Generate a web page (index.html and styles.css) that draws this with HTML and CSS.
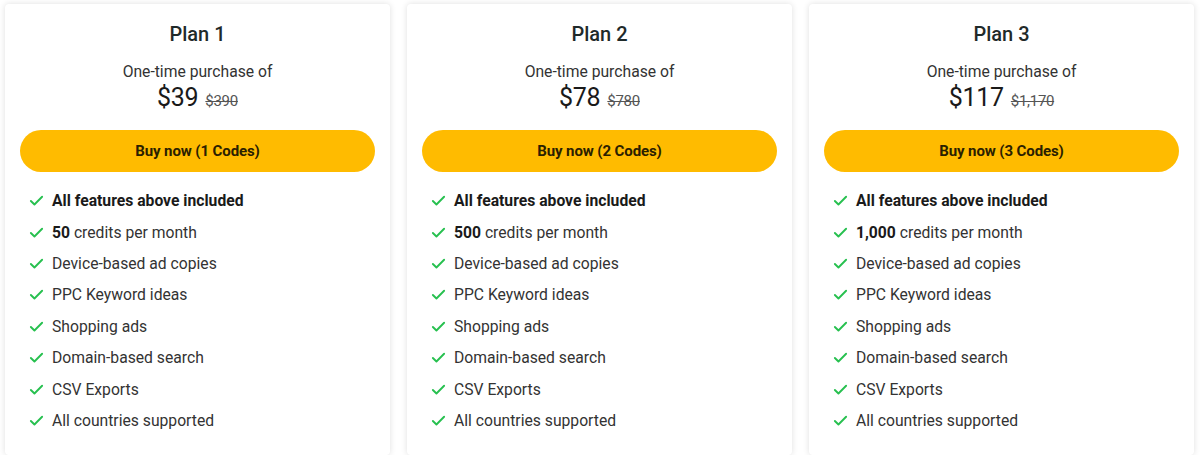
FILE: index.html
```html
<!DOCTYPE html>
<html>
<head>
<meta charset="utf-8">
<link rel="stylesheet" href="styles.css">
</head>
<body>
<div class="plans">
  <div class="card">
    <h2 class="title">Plan 1</h2>
    <p class="sub">One-time purchase of</p>
    <p class="price"><span class="now">$39</span><span class="was">$390</span></p>
    <button class="buy">Buy now (1 Codes)</button>
    <ul class="features">
      <li><svg class="chk" viewBox="0 0 16 16"><path d="M2 8.5l3.8 3.8L14 4"/></svg><b>All features above included</b></li>
      <li><svg class="chk" viewBox="0 0 16 16"><path d="M2 8.5l3.8 3.8L14 4"/></svg><span><b>50</b> credits per month</span></li>
      <li><svg class="chk" viewBox="0 0 16 16"><path d="M2 8.5l3.8 3.8L14 4"/></svg>Device-based ad copies</li>
      <li><svg class="chk" viewBox="0 0 16 16"><path d="M2 8.5l3.8 3.8L14 4"/></svg>PPC Keyword ideas</li>
      <li><svg class="chk" viewBox="0 0 16 16"><path d="M2 8.5l3.8 3.8L14 4"/></svg>Shopping ads</li>
      <li><svg class="chk" viewBox="0 0 16 16"><path d="M2 8.5l3.8 3.8L14 4"/></svg>Domain-based search</li>
      <li><svg class="chk" viewBox="0 0 16 16"><path d="M2 8.5l3.8 3.8L14 4"/></svg>CSV Exports</li>
      <li><svg class="chk" viewBox="0 0 16 16"><path d="M2 8.5l3.8 3.8L14 4"/></svg>All countries supported</li>
    </ul>
  </div>
  <div class="card">
    <h2 class="title">Plan 2</h2>
    <p class="sub">One-time purchase of</p>
    <p class="price"><span class="now">$78</span><span class="was">$780</span></p>
    <button class="buy">Buy now (2 Codes)</button>
    <ul class="features">
      <li><svg class="chk" viewBox="0 0 16 16"><path d="M2 8.5l3.8 3.8L14 4"/></svg><b>All features above included</b></li>
      <li><svg class="chk" viewBox="0 0 16 16"><path d="M2 8.5l3.8 3.8L14 4"/></svg><span><b>500</b> credits per month</span></li>
      <li><svg class="chk" viewBox="0 0 16 16"><path d="M2 8.5l3.8 3.8L14 4"/></svg>Device-based ad copies</li>
      <li><svg class="chk" viewBox="0 0 16 16"><path d="M2 8.5l3.8 3.8L14 4"/></svg>PPC Keyword ideas</li>
      <li><svg class="chk" viewBox="0 0 16 16"><path d="M2 8.5l3.8 3.8L14 4"/></svg>Shopping ads</li>
      <li><svg class="chk" viewBox="0 0 16 16"><path d="M2 8.5l3.8 3.8L14 4"/></svg>Domain-based search</li>
      <li><svg class="chk" viewBox="0 0 16 16"><path d="M2 8.5l3.8 3.8L14 4"/></svg>CSV Exports</li>
      <li><svg class="chk" viewBox="0 0 16 16"><path d="M2 8.5l3.8 3.8L14 4"/></svg>All countries supported</li>
    </ul>
  </div>
  <div class="card">
    <h2 class="title">Plan 3</h2>
    <p class="sub">One-time purchase of</p>
    <p class="price"><span class="now">$117</span><span class="was">$1,170</span></p>
    <button class="buy">Buy now (3 Codes)</button>
    <ul class="features">
      <li><svg class="chk" viewBox="0 0 16 16"><path d="M2 8.5l3.8 3.8L14 4"/></svg><b>All features above included</b></li>
      <li><svg class="chk" viewBox="0 0 16 16"><path d="M2 8.5l3.8 3.8L14 4"/></svg><span><b>1,000</b> credits per month</span></li>
      <li><svg class="chk" viewBox="0 0 16 16"><path d="M2 8.5l3.8 3.8L14 4"/></svg>Device-based ad copies</li>
      <li><svg class="chk" viewBox="0 0 16 16"><path d="M2 8.5l3.8 3.8L14 4"/></svg>PPC Keyword ideas</li>
      <li><svg class="chk" viewBox="0 0 16 16"><path d="M2 8.5l3.8 3.8L14 4"/></svg>Shopping ads</li>
      <li><svg class="chk" viewBox="0 0 16 16"><path d="M2 8.5l3.8 3.8L14 4"/></svg>Domain-based search</li>
      <li><svg class="chk" viewBox="0 0 16 16"><path d="M2 8.5l3.8 3.8L14 4"/></svg>CSV Exports</li>
      <li><svg class="chk" viewBox="0 0 16 16"><path d="M2 8.5l3.8 3.8L14 4"/></svg>All countries supported</li>
    </ul>
  </div>
</div>
</body>
</html>
```
FILE: styles.css
```css
html, body {
  margin: 0;
  padding: 0;
  background: #ffffff;
}
body {
  font-family: Roboto, "Liberation Sans", Arial, sans-serif;
  color: #222;
}
.plans {
  display: flex;
  gap: 17px;
  padding: 4px 5px 0 5px;
}
.card {
  width: 385px;
  height: 451px;
  box-sizing: border-box;
  background: #fff;
  border-radius: 4px;
  box-shadow: 0 0 6px rgba(0,0,0,0.13);
  padding: 18px 15px 0 15px;
  display: flex;
  flex-direction: column;
  align-items: stretch;
}
.title {
  margin: 0;
  text-align: center;
  font-size: 20px;
  font-weight: 500;
  line-height: 24px;
  color: #1f2a2a;
}
.sub {
  margin: 16px 0 0 0;
  text-align: center;
  font-size: 15.7px;
  line-height: 20px;
  color: #333;
}
.price {
  margin: 1px 0 0 0;
  text-align: center;
  line-height: 30px;
  color: #1a1a1a;
}
.now {
  font-size: 25px;
  font-weight: 400;
  letter-spacing: -0.3px;
}
.was {
  font-size: 15px;
  color: #555;
  text-decoration: line-through;
  margin-left: 7px;
  letter-spacing: -0.3px;
}
.buy {
  margin-top: 14px;
  height: 42px;
  border: none;
  border-radius: 21px;
  background: #ffbb00;
  font-family: Roboto, "Liberation Sans", Arial, sans-serif;
  font-size: 15px;
  font-weight: 700;
  color: #2a2000;
  letter-spacing: -0.1px;
}
.features {
  list-style: none;
  margin: 13px 0 0 0;
  padding: 0 0 0 9px;
}
.features li {
  display: flex;
  align-items: center;
  height: 31.43px;
  font-size: 15.7px;
  color: #333;
}
.features b {
  font-weight: 700;
  color: #1a1a1a;
}
.chk {
  width: 15px;
  height: 15px;
  margin-right: 8px;
  flex: none;
  fill: none;
  stroke: #27c04f;
  stroke-width: 2;
  stroke-linecap: round;
  stroke-linejoin: round;
}
```
